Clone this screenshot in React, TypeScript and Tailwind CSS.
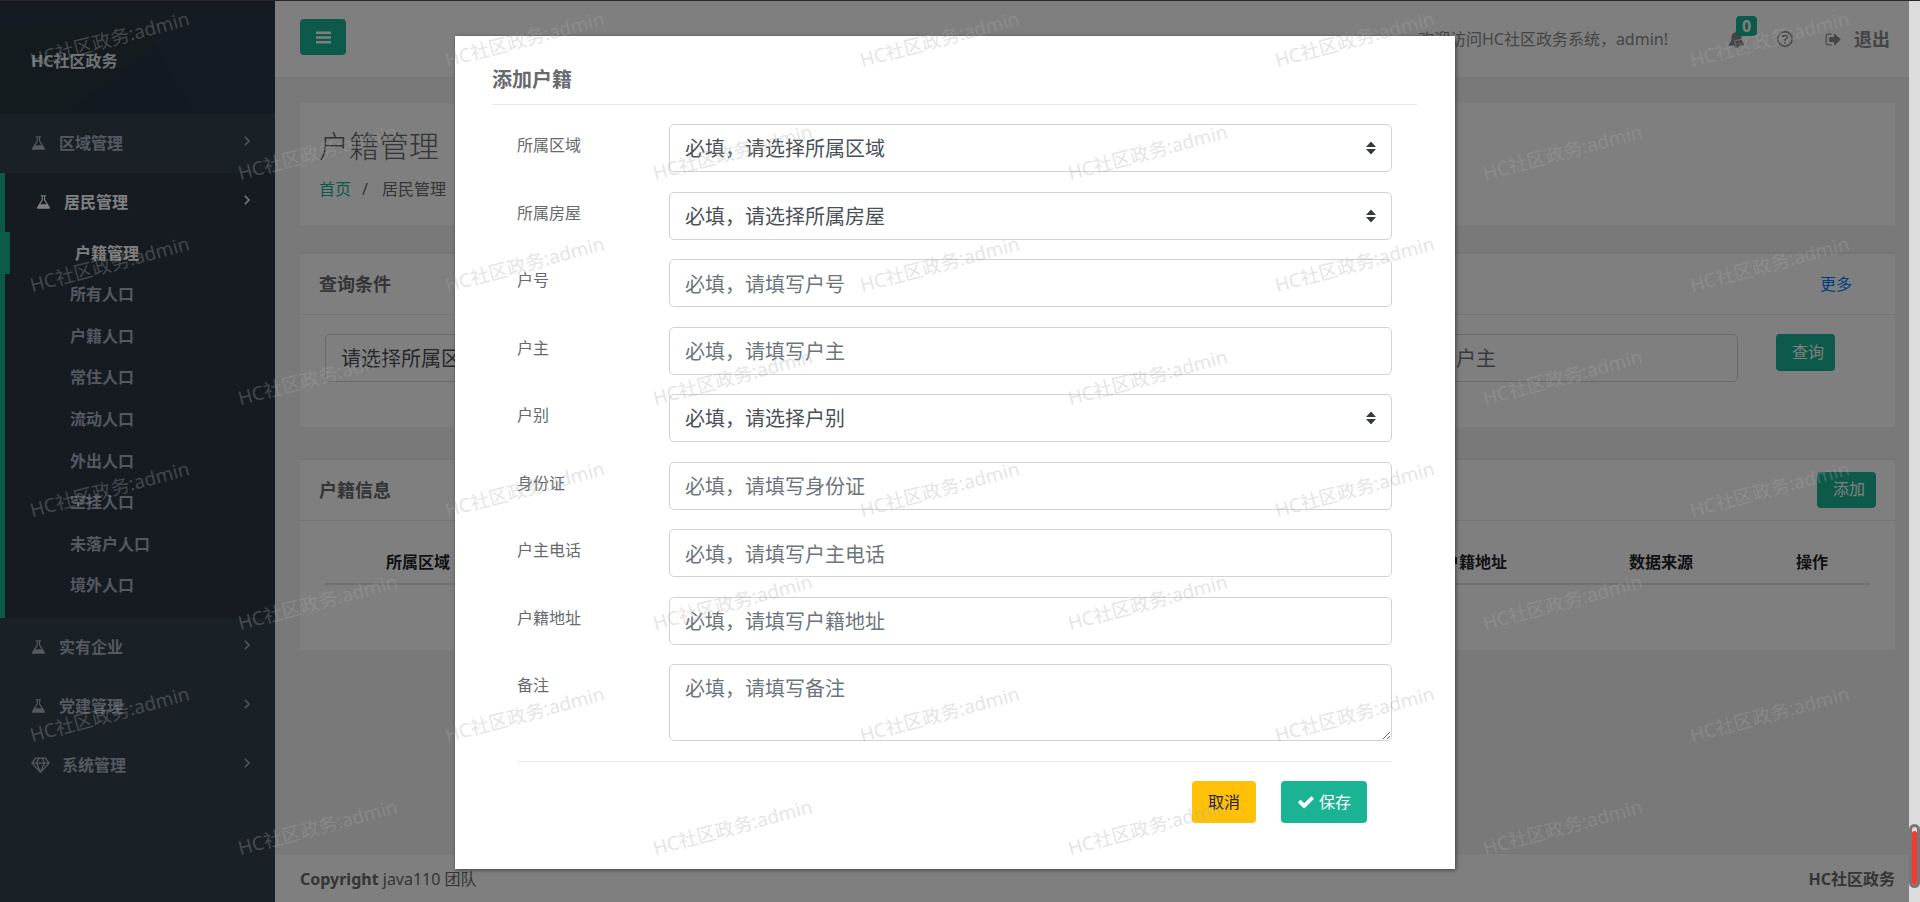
import { useState } from "react";

const FONT = "font-['Noto_Sans','Noto_Sans_CJK_SC',sans-serif]";

const ICONS = {
  flask:
    "M1527 1448q56 89 21.5 152.5t-140.5 63.5h-1152q-106 0-140.5-63.5t21.5-152.5l503-793v-399h-64q-26 0-45-19t-19-45 19-45 45-19h512q26 0 45 19t19 45-19 45-45 19h-64v399zm-779-725l-272 429h712l-272-429-20-31v-436h-128v436z",
  bell:
    "M912 1696q0-16-16-16-59 0-101.5-42.5t-42.5-101.5q0-16-16-16t-16 16q0 73 51.5 124.5t124.5 51.5q16 0 16-16zm816-288q0 52-38 90t-90 38h-448q0 106-75 181t-181 75-181-75-75-181h-448q-52 0-90-38t-38-90q50-42 91-88t85-119.5 74.5-158.5 50-206 19.5-260q0-152 117-282.5t307-158.5q-8-19-8-39 0-40 28-68t68-28 68 28 28 68q0 20-8 39 190 28 307 158.5t117 282.5q0 139 19.5 260t50 206 74.5 158.5 85 119.5 91 88z",
  signOut:
    "M704 1440q0 4 1 20t.5 26.5-3 23.5-10 19.5-20.5 6.5h-320q-119 0-203.5-84.5t-84.5-203.5v-704q0-119 84.5-203.5t203.5-84.5h320q13 0 22.5 9.5t9.5 22.5q0 4 1 20t.5 26.5-3 23.5-10 19.5-20.5 6.5h-320q-66 0-113 47t-47 113v704q0 66 47 113t113 47h312l11.5 1 11.5 3 8 5.5 7 9 2 13.5zm928-544q0 26-19 45l-544 544q-19 19-45 19t-45-19-19-45v-288h-448q-26 0-45-19t-19-45v-384q0-26 19-45t45-19h448v-288q0-26 19-45t45-19 45 19l544 544q19 19 19 45z",
  check:
    "M1671 566q0 40-28 68l-724 724-136 136q-28 28-68 28t-68-28l-136-136-362-362q-28-28-28-68t28-68l136-136q28-28 68-28t68 28l294 295 656-657q28-28 68-28t68 28l136 136q28 28 28 68z",
};

function Glyph({ name, className }: { name: keyof typeof ICONS; className: string }) {
  return (
    <svg viewBox="0 0 1792 1792" fill="currentColor" className={className} aria-hidden="true">
      <path d={ICONS[name]} />
    </svg>
  );
}

function Gem() {
  return (
    <svg viewBox="0 0 19 16" className="h-4 w-[19px]" fill="none" stroke="currentColor" strokeWidth="1.3" strokeLinejoin="round" aria-hidden="true">
      <path d="M4.6 1.2h9.8l3.7 4.9-8.6 9.2-8.6-9.2zM.9 6.1h17.2M7.8 1.2L5.6 6.1l3.9 9.2 3.9-9.2-2.2-4.9" />
    </svg>
  );
}

function Chevron() {
  return (
    <svg viewBox="0 0 6 10" className="mb-1 ml-auto h-[10px] w-[6px]" fill="none" stroke="currentColor" strokeWidth="1.5" aria-hidden="true">
      <path d="M.8.8L5 5 .8 9.2" />
    </svg>
  );
}

function MenuLink({ label, gem, active }: { label: string; gem?: boolean; active?: boolean }) {
  return (
    <a href="#" className={`flex h-[59px] items-center pr-[25px] pb-0.5 font-semibold ${active ? "pl-[31px] text-white" : "pl-[31px] text-[#a7b1c2]"}`}>
      {gem ? <Gem /> : <Glyph name="flask" className="h-4 w-4" />}
      <span className="ml-3">{label}</span>
      <Chevron />
    </a>
  );
}

const SUB_ITEMS = ["户籍管理", "所有人口", "户籍人口", "常住人口", "流动人口", "外出人口", "空挂人口", "未落户人口", "境外人口"];

function Sidebar() {
  return (
    <nav className="w-[275px] shrink-0 bg-[#32424e]">
      <div className="relative h-[113px] overflow-hidden bg-[#263442] pt-11 pl-[31px]">
        <svg viewBox="0 0 275 113" preserveAspectRatio="none" className="absolute inset-0 h-full w-full" aria-hidden="true">
          <path d="M0 25L140 14 155 45 65 113H0z" fill="#28363f" />
          <path d="M155 45l40 68H65z" fill="#263240" />
          <path d="M140 14L275 0v80l-120-35z" fill="#283744" />
        </svg>
        <span className="relative block leading-8 font-bold text-[#dfe4ed]">HC社区政务</span>
      </div>
      <MenuLink label="区域管理" />
      <div className="border-l-[5px] border-[#1ab394] bg-[#2a3643]">
        <MenuLink label="居民管理" active />
        <ul className="-ml-[5px] grid h-[386px] grid-rows-9 pb-3 font-semibold text-[#a7b1c2]">
          {SUB_ITEMS.map((item, i) => (
            <li key={item} className="grid">
              <a
                href="#"
                className={`flex items-center ${i === 0 ? "border-l-[10px] border-[#1ab394] pl-[65px] text-white" : "pl-[70px]"}`}
              >
                {item}
              </a>
            </li>
          ))}
        </ul>
      </div>
      <MenuLink label="实有企业" />
      <MenuLink label="党建管理" />
      <MenuLink label="系统管理" gem />
    </nav>
  );
}

function TopBar() {
  return (
    <header className="flex h-[77px] items-center border-b border-[#e7eaec] bg-white pr-[19px] pl-[25px] text-[#888b8d]">
      <button type="button" aria-label="菜单" className="-mt-1 flex h-9 w-[46px] items-center justify-center rounded bg-[#1ab394] text-white">
        <svg viewBox="0 0 15 13" className="h-[13px] w-[15px]" fill="currentColor" aria-hidden="true">
          <path d="M0 .5h15v2.6H0zM0 5.2h15v2.6H0zM0 9.900h15v2.600H0z" />
        </svg>
      </button>
      <span className="ml-auto">欢迎访问HC社区政务系统，admin!</span>
      <a href="#" aria-label="通知" className="relative ml-[60px]">
        <Glyph name="bell" className="h-[17px] w-[17px]" />
        <span className="absolute -top-[15px] left-2 flex h-5 w-[21px] items-center justify-center rounded bg-[#1ab394] font-bold text-white">0</span>
      </a>
      <a href="#" aria-label="帮助" className="ml-8">
        <svg viewBox="0 0 16 16" className="h-4 w-4" fill="none" stroke="currentColor" aria-hidden="true">
          <circle cx="8" cy="8" r="7.2" strokeWidth="1.4" />
          <path d="M5.600 6.200Q6.200 4.400 8 4.400T10.200 6.200Q10.200 7.400 8.900 8 8 8.500 8 9.700" strokeWidth="1.900" />
          <path d="M7 10.900h2v1.900H7z" fill="currentColor" stroke="none" />
        </svg>
      </a>
      <a href="#" className="ml-8 flex items-center gap-3 text-lg font-bold">
        <Glyph name="signOut" className="h-[17px] w-[17px]" />
        退出
      </a>
    </header>
  );
}

const CONTROL = "block w-full rounded-[5px] border border-[#ced4da] px-[15px] text-xl";

function SelectBox({ id, text }: { id: string; text: string }) {
  return (
    <div className="relative w-full">
      <select id={id} aria-label={text} className={`${CONTROL} h-12 appearance-none bg-white pt-0.5 text-[#495057]`}>
        <option>{text}</option>
      </select>
      <svg viewBox="0 0 10 13" className="pointer-events-none absolute top-1/2 right-4 h-[13px] w-[10px] -translate-y-1/2" fill="#343a40" aria-hidden="true">
        <path d="M5 0l5 5.500H0zM0 7.500h10L5 13z" />
      </svg>
    </div>
  );
}

const PANEL_TITLE = "flex h-[61px] items-center border-b border-[#e7eaec] pl-[19px] text-[#676a6c]";
const SMALL_BUTTON = "rounded bg-[#1ab394] pr-[11px] pb-0.5 pl-4 text-white";

function Page() {
  return (
    <main className="flex-1 pr-[14px] pl-[25px]">
      <section className="mt-[25px] border-b border-[#e7eaec] bg-white px-[19px] pt-[18px] pb-[23px] text-[#676a6c]">
        <h2 className="text-3xl leading-[50px] font-light">户籍管理</h2>
        <ol className="mt-1 flex h-7 items-center">
          <li>
            <a href="#" className="text-[#1ab394]">首页</a>
          </li>
          <li className="ml-[11px]">/</li>
          <li className="ml-[14px]">居民管理</li>
        </ol>
      </section>

      <section className="mt-[25px] border-t-2 border-[#e7eaec] bg-white">
        <div className={`${PANEL_TITLE} justify-between pr-[43px]`}>
          <h5 className="text-lg font-semibold">查询条件</h5>
          <a href="#" className="text-[#007bff]">更多</a>
        </div>
        <div className="flex h-28 items-start pt-[19px] pr-[60px] pl-[25px]">
          <div className="mr-[30px] flex-1">
            <SelectBox id="area-filter" text="请选择所属区域" />
          </div>
          <input aria-label="户主" placeholder="请填写户主" className="h-12 w-[359px] rounded-[5px] border border-[#ced4da] px-4 text-xl placeholder:text-[#6c757d]" />
          <button type="button" className={`${SMALL_BUTTON} ml-[38px] h-[37px]`}>查询</button>
        </div>
      </section>

      <section className="mt-[31px] border-t-2 border-[#e7eaec] bg-white">
        <div className={`${PANEL_TITLE} justify-between pr-[19px]`}>
          <h5 className="text-lg font-semibold">户籍信息</h5>
          <button type="button" className={`${SMALL_BUTTON} h-9`}>添加</button>
        </div>
        <div className="px-[25px] pt-[19px] pb-[65px]">
          <table className="w-full table-fixed border-collapse text-[#212529]">
            <thead>
              <tr className="h-11 border-b-2 border-[#dee2e6]">
                <th className="w-[186px] font-bold">所属区域</th>
                <td />
                <th className="w-[186px] font-bold">户籍地址</th>
                <th className="w-[186px] font-bold">数据来源</th>
                <th className="w-[116px] font-bold">操作</th>
              </tr>
            </thead>
          </table>
        </div>
      </section>
    </main>
  );
}

const FIELDS = [
  { label: "所属区域", hint: "必填，请选择所属区域", select: true },
  { label: "所属房屋", hint: "必填，请选择所属房屋", select: true },
  { label: "户号", hint: "必填，请填写户号" },
  { label: "户主", hint: "必填，请填写户主" },
  { label: "户别", hint: "必填，请选择户别", select: true },
  { label: "身份证", hint: "必填，请填写身份证" },
  { label: "户主电话", hint: "必填，请填写户主电话" },
  { label: "户籍地址", hint: "必填，请填写户籍地址" },
];

function AddDialog() {
  const [note, setNote] = useState("");
  return (
    <div role="dialog" aria-label="添加户籍" className="w-[1000px] bg-white pt-7 pr-[38px] pb-[46px] pl-[37px] text-[#676a6c] shadow-[1px_1px_4px_rgba(0,0,0,0.5)]">
      <h3 className="border-b border-[#e7eaec] pb-2 text-xl leading-8 font-bold">添加户籍</h3>
      <form className="px-[25px] pt-[19px]">
        <div className="grid h-[540px] grid-rows-8">
          {FIELDS.map((f, i) => (
            <div key={f.label} className="flex items-start">
              <label htmlFor={`field-${i}`} className="w-[152px] shrink-0 pt-[9px]">{f.label}</label>
              {f.select ? (
                <SelectBox id={`field-${i}`} text={f.hint} />
              ) : (
                <input id={`field-${i}`} placeholder={f.hint} className={`${CONTROL} h-12 pt-0.5 placeholder:text-[#6c757d]`} />
              )}
            </div>
          ))}
        </div>
        <div className="flex items-start border-b border-[#e7eaec] pb-5">
          <label htmlFor="field-note" className="w-[152px] shrink-0 pt-[9px]">备注</label>
          <textarea
            id="field-note"
            value={note}
            onChange={(e) => setNote(e.target.value)}
            placeholder="必填，请填写备注"
            className={`${CONTROL} h-[77px] py-[9px] leading-[30px] placeholder:text-[#6c757d]`}
          />
        </div>
        <div className="flex justify-end gap-[25px] pt-[19px] pr-[25px]">
          <button type="button" className="h-[42px] rounded bg-[#ffc107] px-4 text-[#212529]">取消</button>
          <button type="button" className="flex h-[42px] items-center gap-1 rounded bg-[#1ab394] px-4 text-white">
            <Glyph name="check" className="h-[18px] w-[18px]" />
            保存
          </button>
        </div>
      </form>
    </div>
  );
}

const MARKS = [0, 1, 2, 3, 4, 5, 6, 7].flatMap((row) =>
  (row % 2 ? [242, 657, 1072, 1487] : [34, 449, 864, 1279, 1694]).map((x) => ({ x, y: 45 + Math.round(row * 112.5) })),
);

function Watermark() {
  return (
    <div aria-hidden="true" className="pointer-events-none absolute inset-0 overflow-hidden text-[19px] leading-7 text-[#aaa] opacity-30">
      {MARKS.map((m) => (
        <span key={`${m.x}-${m.y}`} className="absolute origin-bottom-left -rotate-[15deg] whitespace-nowrap" style={{ left: m.x, top: m.y }}>
          HC社区政务:admin
        </span>
      ))}
    </div>
  );
}

export default function App() {
  return (
    <div className={`${FONT} relative flex min-h-screen flex-col overflow-hidden border-t border-[#2a2628] bg-[#f3f3f4] text-base leading-6`}>
      <div className="flex flex-1">
        <div className="relative flex flex-1">
          <Sidebar />
          <div className="flex flex-1 flex-col">
            <TopBar />
            <Page />
            <footer className="flex h-[49px] items-center justify-between border-t border-[#e7eaec] bg-white pt-0.5 pr-[14px] pl-[25px] text-[#676a6c]">
              <span>
                <strong>Copyright</strong> java110 团队
              </span>
              <strong>HC社区政务</strong>
            </footer>
          </div>
          <div className="absolute inset-0 bg-black/50" />
        </div>
        <div className="relative w-[11px] bg-[#dcdcdc]">
          <div className="absolute bottom-[14px] left-0 h-16 w-[11px] rounded-full border-[3px] border-[#777] bg-[#dcdcdc] pt-1">
            <div className="h-full rounded-full bg-[#f33b35]" />
          </div>
        </div>
      </div>
      <div className="absolute inset-0 flex items-start justify-center pt-[35px] pr-[10px]">
        <AddDialog />
      </div>
      <Watermark />
    </div>
  );
}
